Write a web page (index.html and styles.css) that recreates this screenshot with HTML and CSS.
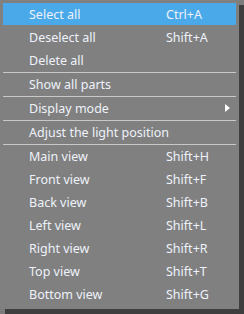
FILE: index.html
```html
<!DOCTYPE html>
<html>
<head>
<meta charset="utf-8">
<link rel="stylesheet" href="styles.css">
</head>
<body>
<div class="menu">
  <div class="item active"><span class="label">Select all</span><span class="key">Ctrl+A</span></div>
  <div class="item"><span class="label">Deselect all</span><span class="key">Shift+A</span></div>
  <div class="item"><span class="label">Delete all</span><span class="key"></span></div>
  <div class="sep"></div>
  <div class="item"><span class="label">Show all parts</span><span class="key"></span></div>
  <div class="sep"></div>
  <div class="item sub"><span class="label">Display mode</span><span class="arrow"></span></div>
  <div class="sep"></div>
  <div class="item"><span class="label">Adjust the light position</span></div>
  <div class="sep"></div>
  <div class="item"><span class="label">Main view</span><span class="key">Shift+H</span></div>
  <div class="item"><span class="label">Front view</span><span class="key">Shift+F</span></div>
  <div class="item"><span class="label">Back view</span><span class="key">Shift+B</span></div>
  <div class="item"><span class="label">Left view</span><span class="key">Shift+L</span></div>
  <div class="item"><span class="label">Right view</span><span class="key">Shift+R</span></div>
  <div class="item"><span class="label">Top view</span><span class="key">Shift+T</span></div>
  <div class="item"><span class="label">Bottom view</span><span class="key">Shift+G</span></div>
</div>
</body>
</html>
```
FILE: styles.css
```css
html, body {
  margin: 0;
  padding: 0;
  background: #7c7c7c;
}
body {
  width: 244px;
  height: 314px;
  overflow: hidden;
}
.menu {
  width: 239px;
  box-sizing: border-box;
  padding: 3px 3px 3px 3px;
  background: #808080;
  box-shadow: 5px 5px 0 #3e3e3e;
  font-family: "Noto Sans", "DejaVu Sans", sans-serif;
  font-size: 12.5px;
  color: #eef2fa;
}
.item {
  height: 23px;
  display: flex;
  align-items: center;
  padding-left: 26px;
  position: relative;
}
.item.active {
  background: #4aa9e9;
  height: 22px;
  margin-bottom: 1px;
}
.label {
  width: 137px;
  white-space: nowrap;
}
.key {
  white-space: nowrap;
}
.sep {
  height: 1px;
  background: #c8c8c8;
}
.arrow {
  position: absolute;
  right: 6px;
  top: 7px;
  width: 0;
  height: 0;
  border-top: 4.5px solid transparent;
  border-bottom: 4.5px solid transparent;
  border-left: 5px solid #ffffff;
}
```
